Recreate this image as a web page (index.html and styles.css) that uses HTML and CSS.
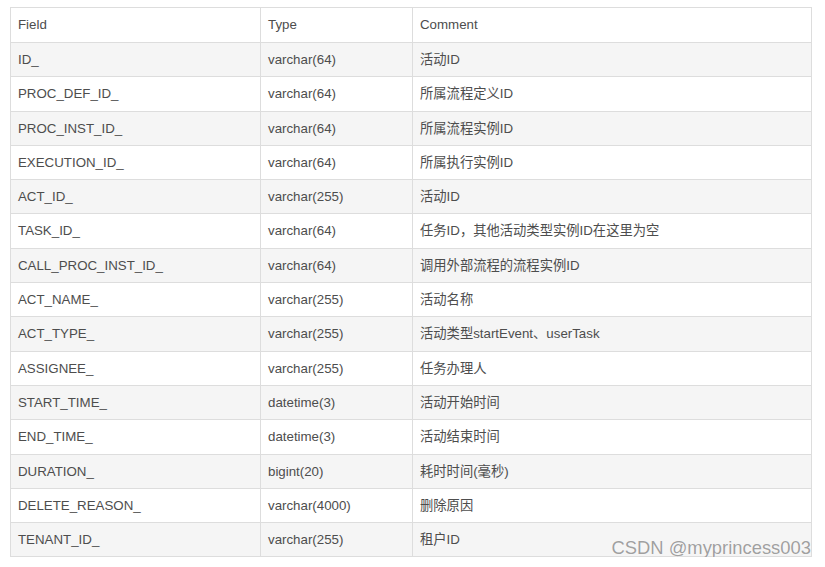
FILE: index.html
```html
<!DOCTYPE html>
<html>
<head>
<meta charset="utf-8">
<link rel="stylesheet" href="styles.css">
</head>
<body>
<div class="wrap">
<table class="tbl">
<colgroup><col class="c1"><col class="c2"><col class="c3"></colgroup>
<thead>
<tr><th>Field</th><th>Type</th><th>Comment</th></tr>
</thead>
<tbody>
<tr><td>ID_</td><td>varchar(64)</td><td>活动ID</td></tr>
<tr><td>PROC_DEF_ID_</td><td>varchar(64)</td><td>所属流程定义ID</td></tr>
<tr><td>PROC_INST_ID_</td><td>varchar(64)</td><td>所属流程实例ID</td></tr>
<tr><td>EXECUTION_ID_</td><td>varchar(64)</td><td>所属执行实例ID</td></tr>
<tr><td>ACT_ID_</td><td>varchar(255)</td><td>活动ID</td></tr>
<tr><td>TASK_ID_</td><td>varchar(64)</td><td>任务ID，其他活动类型实例ID在这里为空</td></tr>
<tr><td>CALL_PROC_INST_ID_</td><td>varchar(64)</td><td>调用外部流程的流程实例ID</td></tr>
<tr><td>ACT_NAME_</td><td>varchar(255)</td><td>活动名称</td></tr>
<tr><td>ACT_TYPE_</td><td>varchar(255)</td><td>活动类型startEvent、userTask</td></tr>
<tr><td>ASSIGNEE_</td><td>varchar(255)</td><td>任务办理人</td></tr>
<tr><td>START_TIME_</td><td>datetime(3)</td><td>活动开始时间</td></tr>
<tr><td>END_TIME_</td><td>datetime(3)</td><td>活动结束时间</td></tr>
<tr><td>DURATION_</td><td>bigint(20)</td><td>耗时时间(毫秒)</td></tr>
<tr><td>DELETE_REASON_</td><td>varchar(4000)</td><td>删除原因</td></tr>
<tr><td>TENANT_ID_</td><td>varchar(255)</td><td>租户ID</td></tr>
</tbody>
</table>
<div class="mark">CSDN @myprincess003</div>
</div>
</body>
</html>
```
FILE: styles.css
```css
html, body {
  margin: 0;
  padding: 0;
  background: #fff;
}
.wrap {
  position: relative;
  padding: 7px 0 0 10px;
  width: 802px;
}
.tbl {
  border-collapse: collapse;
  width: 801px;
  table-layout: fixed;
  font-family: "Liberation Sans", Arial, "Noto Sans CJK SC", sans-serif;
  font-size: 13.3px;
  color: #4d4d4d;
}
.c1 { width: 250px; }
.c2 { width: 152px; }
.c3 { width: 399px; }
.tbl th, .tbl td {
  border: 1px solid #dddddd;
  padding: 6px 7px;
  line-height: 21.3px;
  text-align: left;
  font-weight: normal;
  white-space: nowrap;
}
.tbl th {
  line-height: 22px;
}
.tbl tbody tr:nth-child(odd) {
  background: #f5f5f5;
}
.mark {
  position: absolute;
  right: 1px;
  top: 537px;
  font-family: "Liberation Sans", Arial, sans-serif;
  font-size: 18.4px;
  color: #a0a0a0;
  text-shadow: 0 0 1px #fff, 0 0 1px #fff;
}
```
